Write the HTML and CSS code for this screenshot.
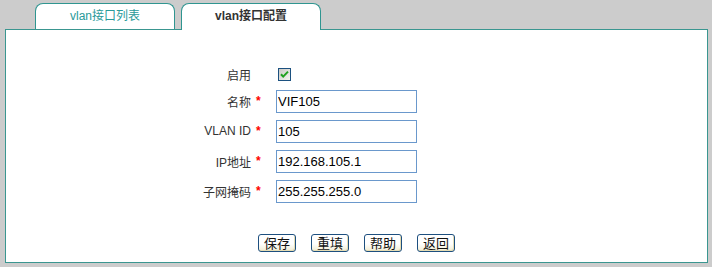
FILE: index.html
```html
<!DOCTYPE html>
<html lang="zh-CN">
<head>
    <meta charset="UTF-8">
    <title>vlan接口配置</title>
    <link rel="stylesheet" href="styles.css">
</head>
<body>
    <div class="tabs">
        <div class="tab">vlan接口列表</div>
        <div class="tab active">vlan接口配置</div>
    </div>
    <div class="panel">
        <div class="form">
            <div class="label">启用</div>
            <div class="star"></div>
            <div class="field">
                <span class="check">
                    <svg width="13" height="13" viewBox="0 0 13 13">
                        <defs>
                            <linearGradient id="cb" x1="0" y1="0" x2="1" y2="1">
                                <stop offset="0" stop-color="#c8c8c4"/>
                                <stop offset="1" stop-color="#f6f6f2"/>
                            </linearGradient>
                        </defs>
                        <rect x="0.5" y="0.5" width="12" height="12" fill="url(#cb)" stroke="#1c5180"/>
                        <path d="M3 6.2 L5.2 8.6 L10 3.6" fill="none" stroke="#21a121" stroke-width="2"/>
                    </svg>
                </span>
            </div>

            <div class="label">名称</div>
            <div class="star">*</div>
            <div class="field"><input type="text" value="VIF105"></div>

            <div class="label">VLAN ID</div>
            <div class="star">*</div>
            <div class="field"><input type="text" value="105"></div>

            <div class="label">IP地址</div>
            <div class="star">*</div>
            <div class="field"><input type="text" value="192.168.105.1"></div>

            <div class="label">子网掩码</div>
            <div class="star">*</div>
            <div class="field"><input type="text" value="255.255.255.0"></div>
        </div>
        <div class="buttons">
            <button>保存</button>
            <button>重填</button>
            <button>帮助</button>
            <button>返回</button>
        </div>
    </div>
</body>
</html>
```

FILE: styles.css
```css
body{
    margin: 0;
    padding-top: 3px;
    background: #cccccc;
    font-family: "Liberation Sans", "Noto Sans CJK SC", sans-serif;
    font-size: 12px;
    color: #333333;
}
.tabs{
    display: flex;
    align-items: flex-end;
    gap: 6px;
    height: 26px;
    padding-left: 35px;
}
.tab{
    width: 138px;
    height: 25px;
    line-height: 25px;
    border: 1px solid #2f9590;
    border-bottom: none;
    border-radius: 8px 8px 0 0;
    background: #ffffff;
    text-align: center;
    color: #2a9a9a;
}
.tab.active{
    height: 26px;
    margin-bottom: -1px;
    position: relative;
    z-index: 1;
    font-weight: bold;
    color: #333333;
}
.panel{
    margin: 0 4px 0 5px;
    border: 1px solid #3a9690;
    background: #ffffff;
    padding: 32px 0 10px 0;
}
.form{
    display: grid;
    grid-template-columns: 246px 24px 141px;
    grid-template-rows: 24px repeat(4, 30px);
    align-items: center;
}
.label{
    text-align: right;
    padding-right: 1px;
}
.star{
    color: #ff0000;
    font-weight: bold;
    padding-left: 4px;
}
.check{
    display: block;
    width: 13px;
    height: 13px;
    margin-left: 2px;
}
.check svg{
    display: block;
}
.field input{
    display: block;
    box-sizing: border-box;
    width: 141px;
    height: 23px;
    margin: 0;
    padding: 0 1px;
    border: 1px solid #6a98cc;
    font-family: "Liberation Sans", sans-serif;
    font-size: 13px;
    color: #000000;
    outline: none;
}
.buttons{
    display: flex;
    justify-content: center;
    gap: 15px;
    margin-top: 28px;
}
.buttons button{
    box-sizing: border-box;
    width: 38px;
    height: 18px;
    padding: 0;
    border: 1px solid #1d4f7f;
    border-radius: 3px;
    background: linear-gradient(to bottom, #ffffff 55%, #f1ecd2);
    box-shadow: inset -1px -1px 0 #e4dcb4;
    font-family: "Noto Sans CJK SC", sans-serif;
    font-size: 13px;
    line-height: 16px;
    color: #111111;
}
```
